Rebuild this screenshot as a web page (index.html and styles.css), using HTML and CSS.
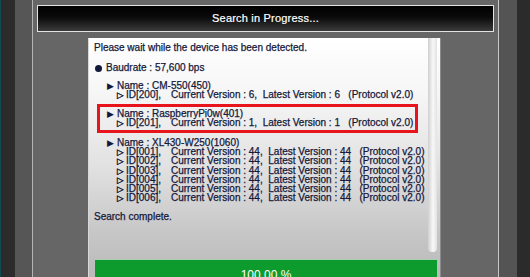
FILE: index.html
```html
<!DOCTYPE html>
<html lang="en">

<head>
  <meta charset="UTF-8">
  <title>Search in Progress</title>
  <link rel="stylesheet" href="styles.css">
</head>

<body>
  <div class="screen">
    <div class="edge-teal"></div>
    <div class="frame-dark"></div>
    <div class="frame-mid"></div>

    <main class="window">
      <header class="titlebar">Search in Progress...</header>

      <section class="panel">
        <div class="panel-body">
          <div class="log">
            <p class="intro">Please wait while the device has been detected.</p>
            <p class="baud"><span class="dot"></span>Baudrate : 57,600 bps</p>

            <div class="devices">
              <div class="device">
                <div class="name"><span class="tri">▶</span>Name : CM-550(450)</div>
                <div class="id"><span class="tri-o">▷</span><span class="id-no">ID[200],</span>Current Version : 6,  Latest Version : 6   (Protocol v2.0)</div>
              </div>

              <div class="device selected">
                <div class="name"><span class="tri">▶</span>Name : RaspberryPi0w(401)</div>
                <div class="id"><span class="tri-o">▷</span><span class="id-no">ID[201],</span>Current Version : 1,  Latest Version : 1   (Protocol v2.0)</div>
              </div>

              <div class="device">
                <div class="name"><span class="tri">▶</span>Name : XL430-W250(1060)</div>
                <div class="id"><span class="tri-o">▷</span><span class="id-no">ID[001],</span>Current Version : 44,  Latest Version : 44   (Protocol v2.0)</div>
                <div class="id"><span class="tri-o">▷</span><span class="id-no">ID[002],</span>Current Version : 44,  Latest Version : 44   (Protocol v2.0)</div>
                <div class="id"><span class="tri-o">▷</span><span class="id-no">ID[003],</span>Current Version : 44,  Latest Version : 44   (Protocol v2.0)</div>
                <div class="id"><span class="tri-o">▷</span><span class="id-no">ID[004],</span>Current Version : 44,  Latest Version : 44   (Protocol v2.0)</div>
                <div class="id"><span class="tri-o">▷</span><span class="id-no">ID[005],</span>Current Version : 44,  Latest Version : 44   (Protocol v2.0)</div>
                <div class="id"><span class="tri-o">▷</span><span class="id-no">ID[006],</span>Current Version : 44,  Latest Version : 44   (Protocol v2.0)</div>
              </div>
            </div>

            <p class="done">Search complete.</p>
          </div>
          <div class="scrollbar"></div>
        </div>

        <div class="progress">100.00 %</div>
      </section>
    </main>

    <div class="frame-mid right"></div>
    <div class="frame-dark right"></div>
  </div>
</body>

</html>
```

FILE: styles.css
```css
body {
  margin: 0;
  width: 530px;
  height: 277px;
  overflow: hidden;
  background: #2a2a2a;
  font-family: "Liberation Sans", Arial, sans-serif;
}

.screen {
  display: flex;
  height: 277px;
}

.edge-teal {
  width: 1px;
  background: #0d4d4f;
}

.frame-dark {
  width: 14px;
  background: #2b2b2b;
}

.frame-dark.right {
  width: 13px;
}

.frame-mid {
  width: 17px;
  background: #565656;
}

.frame-mid.right {
  width: 18px;
  background: #545454;
}

.window {
  width: 465px;
  background: #666;
  border-left: 1px solid #b4b4b4;
  border-right: 1px solid #c8c8c8;
  display: flex;
  flex-direction: column;
}

.titlebar {
  margin: 5px 4px 0;
  height: 25px;
  border: 1px solid #e2e2e2;
  background: linear-gradient(#000 0%, #0a0a0a 45%, #3a3a3a 100%);
  color: #fff;
  font-size: 11px;
  line-height: 25px;
  text-align: center;
  letter-spacing: 0.2px;
  -webkit-text-stroke: 0.2px #fff;
}

.panel {
  flex: 1;
  width: 353px;
  margin: 6px 0 0 55px;
  display: flex;
  flex-direction: column;
  background: linear-gradient(#fff 0%, #f6f6f6 22%, #e2e2e2 50%, #c6c6c6 78%, #b6b6b6 100%);
  box-shadow: inset 1px 0 0 #d8d8d8, inset -1px 0 0 #8a8a8a;
}

.panel-body {
  display: flex;
  height: 214px;
}

.log {
  flex: 1;
  padding: 5px 0 0 6px;
  color: #14183a;
  font-size: 10px;
  -webkit-text-stroke: 0.25px #14183a;
}

.log p {
  margin: 0;
  line-height: 10px;
}

.baud {
  margin-top: 10px !important;
  padding-left: 1px;
  display: flex;
  align-items: center;
}

.dot {
  width: 7px;
  height: 7px;
  border-radius: 50%;
  background: #14183a;
  margin-right: 4px;
}

.devices {
  margin-top: 2.5px;
}

.device {
  width: 315px;
  margin-left: 3px;
  padding: 2px 0;
  border: 3px solid transparent;
}

.device.selected {
  border-color: #e8141c;
}

.name,
.id {
  height: 9.3px;
  line-height: 9.3px;
  white-space: pre;
}

.name {
  padding-left: 7px;
}

.id {
  padding-left: 17px;
}

.tri,
.tri-o {
  display: inline-block;
  font-family: "DejaVu Sans", sans-serif;
  font-size: 9px;
  line-height: 0;
  -webkit-text-stroke: 0;
}

.tri {
  width: 10px;
}

.tri-o {
  width: 9px;
  font-size: 8.5px;
  -webkit-text-stroke: 0.4px #14183a;
}

.id-no {
  display: inline-block;
  width: 45px;
}

.done {
  margin-top: 4px !important;
}

.scrollbar {
  width: 9px;
  margin-right: 4px;
  border-radius: 0 0 4px 4px;
  background: linear-gradient(90deg, #cfcfcf, #f8f8f8 55%, #e2e2e2);
}

.progress {
  margin: 7px 4px 0 7px;
  height: 30px;
  background: #0d9b2e;
  border-top: 1px solid #a6d0b0;
  color: #fff;
  font-size: 12px;
  line-height: 30px;
  text-align: center;
}
```
